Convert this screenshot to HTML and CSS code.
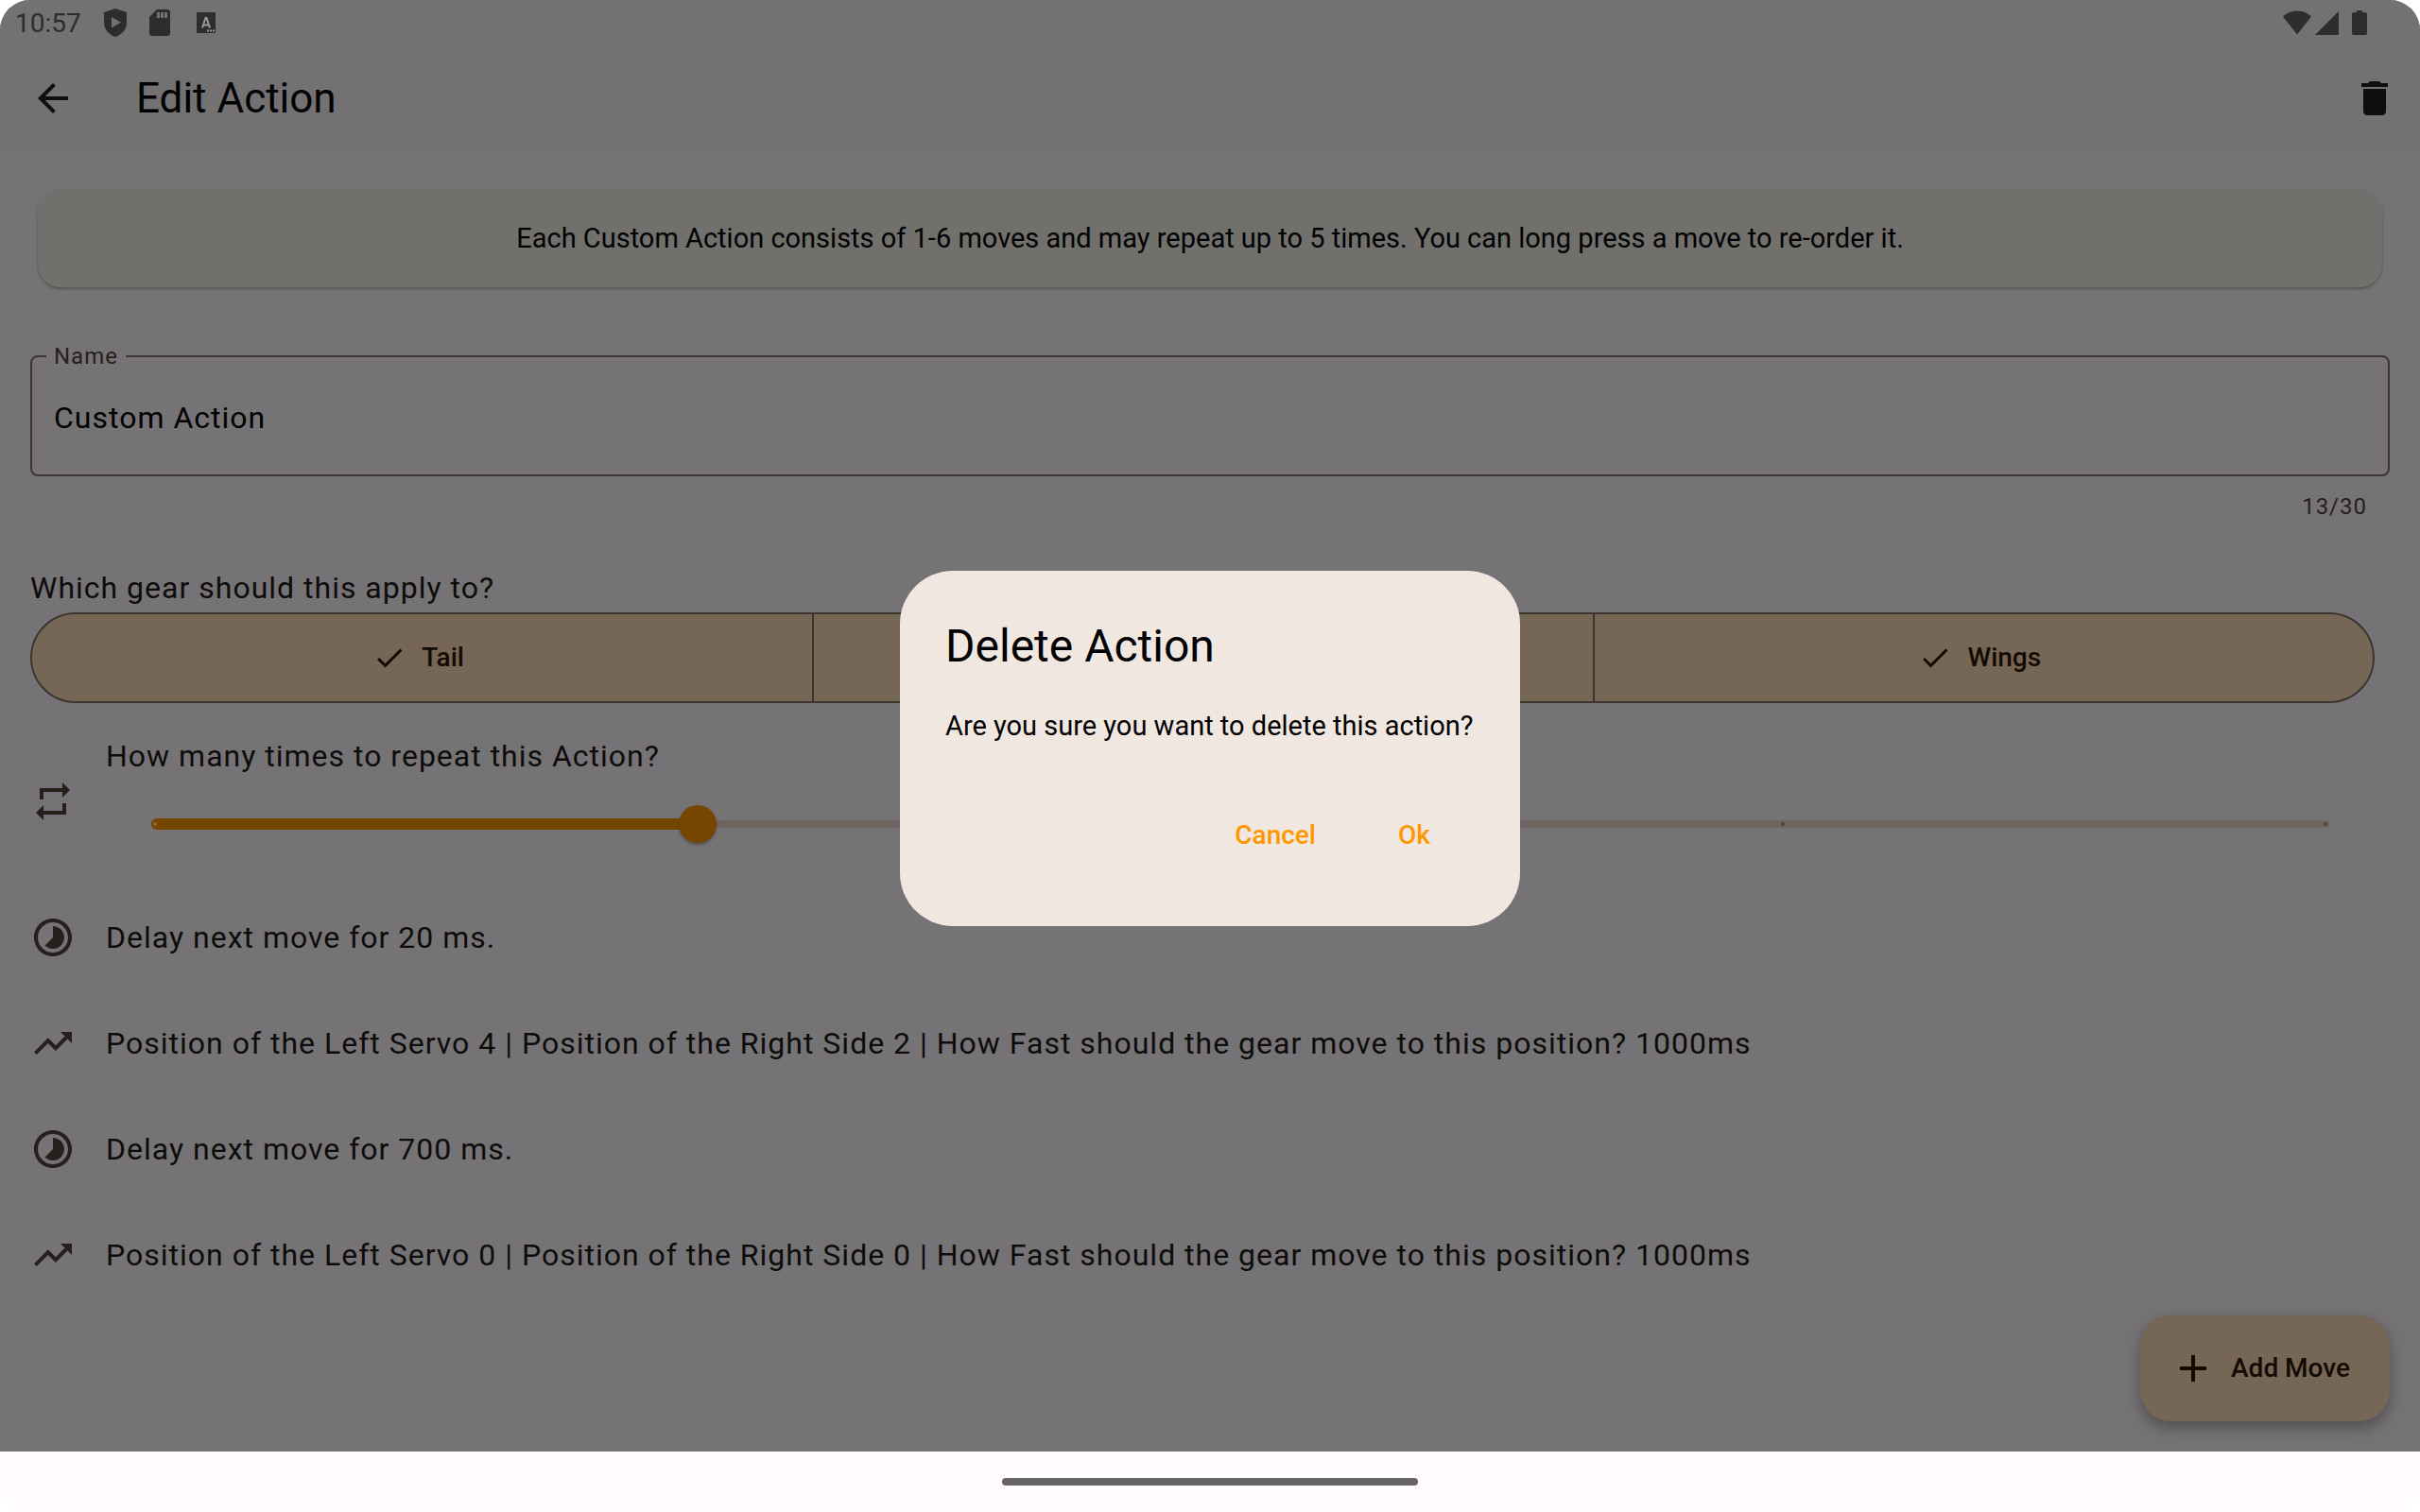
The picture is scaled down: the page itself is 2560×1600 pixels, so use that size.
FILE: index.html
```html
<!DOCTYPE html>
<html lang="en">
<head>
<meta charset="utf-8">
<title>Edit Action</title>
<link rel="stylesheet" href="styles.css">
</head>
<body>
<svg class="sprite" aria-hidden="true">
  <symbol id="check" viewBox="0 0 24 24"><path d="M9 16.17 4.83 12l-1.42 1.41L9 19 21 7l-1.41-1.41z"/></symbol>
  <symbol id="delay" viewBox="0 0 24 24"><path d="M16.24 7.76C15.07 6.59 13.54 6 12 6v6l-4.24 4.24c2.34 2.34 6.14 2.34 8.49 0 2.34-2.34 2.34-6.14-.01-8.48zM12 2C6.48 2 2 6.48 2 12s4.48 10 10 10 10-4.48 10-10S17.52 2 12 2zm0 18c-4.42 0-8-3.58-8-8s3.58-8 8-8 8 3.58 8 8-3.58 8-8 8z"/></symbol>
  <symbol id="move" viewBox="0 0 24 24"><path d="M16 6l2.29 2.29-4.880 4.880-4-4L2 16.590 3.410 18l6-6 4 4 6.300-6.290L22 12V6z"/></symbol>
</svg>
<div class="screen">
  <div class="status">
    <div class="status-group">
      <span class="time">10:57</span>
      <svg class="shield" width="24" height="30" viewBox="0 0 24 30"><path fill-rule="evenodd" d="M12 0 24 4v11c0 7-5 12.500-12 15C5 27.500 0 22 0 15V4zM8 9v11.500L18 14.700z"/></svg>
      <svg class="sd" width="22" height="28" viewBox="0 0 22 28"><path fill-rule="evenodd" d="M8 0h11a3 3 0 0 1 3 3v22a3 3 0 0 1-3 3H3a3 3 0 0 1-3-3V8zM8 3v6h3V3zM12 3v6h3V3zM16 3v6h3V3z"/></svg>
      <svg class="lang" width="20" height="22" viewBox="0 0 20 22"><rect width="20" height="22" rx="1"/><path class="lang-mark" d="M6 16.500 9.500 6h1L14 16.500M7.500 13.500h5"/><path class="lang-dots" d="M11 19.500h8"/></svg>
    </div>
    <div class="status-group">
      <svg width="30" height="26" viewBox="0 0 30 26"><path d="M15 25.500 0 6.500C4 2.500 9 .5 15 .5s11 2 15 6z"/></svg>
      <svg class="signal" width="25" height="25" viewBox="0 0 25 25"><path d="M25 0v25H0z"/></svg>
      <svg class="battery" width="16" height="26" viewBox="0 0 16 26"><path d="M5 0h6v2h3a2 2 0 0 1 2 2v20a2 2 0 0 1-2 2H2a2 2 0 0 1-2-2V4a2 2 0 0 1 2-2h3z"/></svg>
    </div>
  </div>
  <header class="appbar">
    <button class="icon-button" aria-label="Back"><svg class="icon" viewBox="0 0 24 24"><path d="M20 11H7.830l5.590-5.590L12 4l-8 8 8 8 1.410-1.410L7.830 13H20z"/></svg></button>
    <h1 class="title">Edit Action</h1>
    <button class="icon-button" aria-label="Delete"><svg class="icon" viewBox="0 0 24 24"><path d="M6 19c0 1.100.9 2 2 2h8c1.100 0 2-.9 2-2V7H6zM19 4h-3.500l-1-1h-5l-1 1H5v2h14z"/></svg></button>
  </header>
  <main class="content">
    <p class="info">Each Custom Action consists of 1-6 moves and may repeat up to 5 times. You can long press a move to re-order it.</p>
    <fieldset class="field">
      <legend class="legend"><label for="name">Name</label></legend>
      <input class="name-input" id="name" type="text" maxlength="30" value="Custom Action">
    </fieldset>
    <div class="counter">13/30</div>
    <h2 class="question">Which gear should this apply to?</h2>
    <div class="segments">
      <button class="segment"><svg class="check" viewBox="0 0 24 24"><use href="#check"/></svg>Tail</button>
      <button class="segment" aria-label="Ears"></button>
      <button class="segment"><svg class="check" viewBox="0 0 24 24"><use href="#check"/></svg>Wings</button>
    </div>
    <div class="repeat">
      <svg class="icon" viewBox="0 0 24 24"><path d="M7 7h10v3l4-4-4-4v3H5v6h2zM17 17H7v-3l-4 4 4 4v-3h12v-6h-2z"/></svg>
      <div class="repeat-body">
        <label class="repeat-label" for="repeat">How many times to repeat this Action?</label>
        <div class="slider">
          <div class="track"><i class="tick"></i><i class="tick"></i><i class="tick"></i><i class="tick"></i><i class="tick"></i></div>
          <div class="track-active"><i class="tick-active"></i></div>
          <input class="range" id="repeat" type="range" min="1" max="5" value="2">
        </div>
      </div>
    </div>
    <ul class="moves">
      <li class="move"><svg class="icon" viewBox="0 0 24 24"><use href="#delay"/></svg>Delay next move for 20 ms.</li>
      <li class="move"><svg class="icon" viewBox="0 0 24 24"><use href="#move"/></svg>Position of the Left Servo 4 | Position of the Right Side 2 | How Fast should the gear move to this position? 1000ms</li>
      <li class="move"><svg class="icon" viewBox="0 0 24 24"><use href="#delay"/></svg>Delay next move for 700 ms.</li>
      <li class="move"><svg class="icon" viewBox="0 0 24 24"><use href="#move"/></svg>Position of the Left Servo 0 | Position of the Right Side 0 | How Fast should the gear move to this position? 1000ms</li>
    </ul>
  </main>
  <button class="fab"><svg class="icon" viewBox="0 0 24 24"><path d="M19 13h-6v6h-2v-6H5v-2h6V5h2v6h6z"/></svg>Add Move</button>
  <div class="overlay">
    <div class="dialog" role="dialog" aria-modal="true" aria-labelledby="dialog-title">
      <h2 class="dialog-title" id="dialog-title">Delete Action</h2>
      <p class="dialog-text">Are you sure you want to delete this action?</p>
      <div class="dialog-actions">
        <button class="text-button">Cancel</button>
        <button class="text-button">Ok</button>
      </div>
    </div>
  </div>
</div>
<footer class="navbar"><div class="handle"></div></footer>
</body>
</html>
```
FILE: styles.css
```css
* { box-sizing: border-box; margin: 0; padding: 0; }

html { background: #fff; }

body {
  display: flex;
  flex-direction: column;
  min-height: 100vh;
  font-family: Roboto, "Liberation Sans", sans-serif;
  font-size: 32px;
  line-height: 48px;
  color: #0e0c0a;
}

button, input { font: inherit; color: inherit; border: 0; background: none; }
button { cursor: pointer; }
svg { display: block; flex: none; fill: currentColor; }
.sprite { position: absolute; width: 0; height: 0; }
.icon { width: 48px; height: 48px; }

.screen {
  position: relative;
  flex: 1;
  background: #757375;
  border-radius: 32px 32px 0 0;
  overflow: hidden;
}

.status {
  display: flex;
  justify-content: space-between;
  height: 48px;
  padding: 0 56px 0 16px;
  background: #737171;
  color: #2d2d2d;
}
.status-group { display: flex; align-items: center; }
.time { padding-top: 2px; font-size: 28px; }
.shield { margin-left: 24px; }
.sd { margin-left: 24px; }
.lang { margin-left: 28px; }
.lang-mark { fill: none; stroke: #9a9898; stroke-width: 2; }
.lang-dots { fill: none; stroke: #9a9898; stroke-width: 2; stroke-dasharray: 2 1; }
.signal { margin-left: 4px; }
.battery { margin-left: 14px; }

.appbar {
  display: flex;
  align-items: center;
  height: 112px;
  padding: 0 24px 0 32px;
  background: #737171;
  color: #0e0e0e;
}
.icon-button { display: flex; }
.title { flex: 1; margin-left: 64px; font-size: 44px; font-weight: 400; line-height: 56px; color: #000; }

.content { padding: 40px 32px 0; }

.info {
  margin: 0 8px;
  padding: 32px;
  border-radius: 24px;
  background: #71706c;
  box-shadow: 0 2px 3px rgba(0, 0, 0, .25);
  color: #000;
  font-size: 29px;
  line-height: 40px;
  text-align: center;
}

.field {
  height: 140px;
  margin-top: 60px;
  border: 2px solid #3c3530;
  border-radius: 8px;
}
.legend {
  margin-left: 15px;
  padding: 0 8px;
  font-size: 24px;
  line-height: 26px;
  letter-spacing: 1px;
  color: #25201b;
}
.name-input { display: block; width: 100%; height: 104px; padding: 0 23px; color: #000; letter-spacing: 1px; outline: 0; }

.counter { padding: 16px 24px 0; font-size: 24px; line-height: 32px; letter-spacing: 1px; text-align: right; color: #25201b; }

.question { margin-top: 46px; padding-bottom: 2px; font-size: 32px; font-weight: 400; letter-spacing: 1px; }

.segments {
  display: grid;
  grid-template-columns: repeat(3, 1fr);
  height: 96px;
  margin-right: 16px;
  border: 2px solid #3c3530;
  border-radius: 48px;
  background: #756655;
  color: #140b00;
  overflow: hidden;
}
.segment { display: flex; align-items: center; justify-content: center; gap: 16px; padding-right: 8px; font-size: 28px; font-weight: 500; }
.segment + .segment { border-left: 2px solid #3c3530; }
.check { width: 36px; height: 36px; }

.repeat { display: flex; align-items: center; gap: 32px; height: 192px; padding-top: 16px; color: #25201b; }
.repeat-body { flex: 1; padding-right: 16px; }
.repeat-label { display: block; color: #0e0c0a; letter-spacing: 1px; }
.slider { display: grid; align-items: center; margin: 0 32px; height: 96px; }
.slider > * { grid-area: 1 / 1; }
.track { display: flex; justify-content: space-between; align-items: center; height: 8px; margin: 0 16px; padding: 0 2px; border-radius: 4px; background: #6e645d; }
.tick, .tick-active { width: 4px; height: 4px; border-radius: 2px; background: #4b443f; }
.track-active { display: flex; align-items: center; width: 25%; height: 12px; margin-left: 16px; padding-left: 2px; border-radius: 6px; background: #754600; }
.tick-active { background: #8a6638; }
.range { appearance: none; width: 100%; height: 40px; }
.range::-webkit-slider-thumb { appearance: none; width: 40px; height: 40px; border-radius: 20px; background: #754600; box-shadow: 0 2px 3px rgba(0, 0, 0, .3); }

.moves { list-style: none; }
.move { display: flex; align-items: center; gap: 32px; height: 112px; letter-spacing: 1px; }
.move .icon { color: #25201b; }

.fab {
  position: absolute;
  right: 32px;
  bottom: 32px;
  display: flex;
  align-items: center;
  gap: 16px;
  height: 112px;
  padding: 0 42px 0 32px;
  border-radius: 32px;
  background: #756655;
  box-shadow: 0 6px 20px rgba(0, 0, 0, .2), 0 8px 8px rgba(0, 0, 0, .12);
  color: #140b00;
  font-size: 28px;
  font-weight: 500;
}

.overlay { position: absolute; inset: 48px 0 0; display: flex; align-items: center; justify-content: center; }
.dialog { min-width: 656px; padding: 48px; border-radius: 56px; background: #f1e7e1; color: #000; }
.dialog-title { font-size: 48px; font-weight: 400; line-height: 64px; }
.dialog-text { margin-top: 32px; font-size: 29px; line-height: 40px; }
.dialog-actions { display: flex; justify-content: flex-end; gap: 16px; margin-top: 48px; }
.text-button { min-width: 128px; height: 96px; padding: 0 24px; font-size: 28px; font-weight: 500; color: #ff9800; }

.navbar {
  display: flex;
  align-items: center;
  justify-content: center;
  height: 64px;
  border-radius: 0 0 32px 32px;
  background: #fffbff;
}
.handle { width: 440px; height: 8px; border-radius: 4px; background: #666466; }
```
